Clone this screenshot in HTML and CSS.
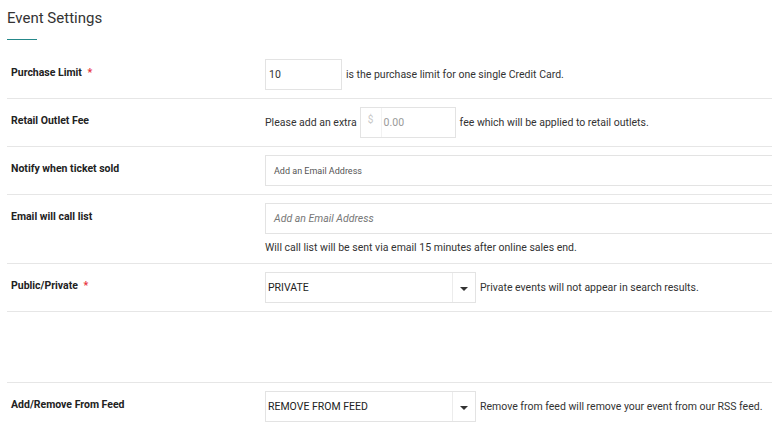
FILE: index.html
```html
<!DOCTYPE html>
<html lang="en">
<head>
  <meta charset="UTF-8">
  <title>Event Settings</title>
  <link rel="stylesheet" href="styles.css">
</head>
<body>
  <div class="settings">
    <h2 class="settings-title">Event Settings</h2>

    <div class="setting-row">
      <div class="setting-label">Purchase Limit <span class="req">*</span></div>
      <div class="setting-control">
        <input class="field field-short" type="text" value="10">
        <span class="note">is the purchase limit for one single Credit Card.</span>
      </div>
    </div>

    <div class="setting-row">
      <div class="setting-label">Retail Outlet Fee</div>
      <div class="setting-control">
        <span class="note note-before">Please add an extra</span>
        <div class="money">
          <span class="money-sign">$</span>
          <span class="money-value">0.00</span>
        </div>
        <span class="note">fee which will be applied to retail outlets.</span>
      </div>
    </div>

    <div class="setting-row">
      <div class="setting-label">Notify when ticket sold</div>
      <div class="setting-control">
        <div class="field field-wide field-small">Add an Email Address</div>
      </div>
    </div>

    <div class="setting-row">
      <div class="setting-label">Email will call list</div>
      <div class="setting-control setting-stack">
        <div class="field field-wide field-italic">Add an Email Address</div>
        <div class="help">Will call list will be sent via email 15 minutes after online sales end.</div>
      </div>
    </div>

    <div class="setting-row">
      <div class="setting-label">Public/Private <span class="req">*</span></div>
      <div class="setting-control">
        <div class="select">
          <span class="select-value">PRIVATE</span>
          <span class="select-arrow"></span>
        </div>
        <span class="note">Private events will not appear in search results.</span>
      </div>
    </div>

    <div class="setting-row setting-empty"></div>

    <div class="setting-row">
      <div class="setting-label">Add/Remove From Feed</div>
      <div class="setting-control">
        <div class="select">
          <span class="select-value">REMOVE FROM FEED</span>
          <span class="select-arrow"></span>
        </div>
        <span class="note">Remove from feed will remove your event from our RSS feed.</span>
      </div>
    </div>
  </div>
</body>
</html>
```

FILE: styles.css
```css
body {
  margin: 0;
  font-family: Roboto, "Liberation Sans", sans-serif;
  color: #333;
  background: #fff;
  overflow: hidden;
}

.settings {
  width: 765px;
  padding: 8px 0 0 7px;
  overflow: hidden;
}

.settings-title {
  margin: 0;
  font-size: 15px;
  font-weight: 400;
  line-height: 20px;
  color: #333;
  padding-bottom: 11px;
}

.settings-title::after {
  content: "";
  display: block;
  width: 30px;
  height: 1px;
  background: #25888a;
  margin-top: 11px;
}

.setting-row {
  display: flex;
  padding: 8px 0;
  border-bottom: 1px solid #e6e6e6;
}

.setting-empty {
  height: 54px;
}

.setting-label {
  flex-shrink: 0;
  width: 254px;
  padding-left: 4px;
  font-size: 10.5px;
  font-weight: 700;
  line-height: 28px;
  color: #222;
}

.req {
  color: #e8333c;
  margin-left: 3px;
}

.setting-control {
  flex: 1;
  display: flex;
  align-items: center;
  font-size: 10.5px;
  min-width: 0;
}

.setting-stack {
  flex-direction: column;
  align-items: flex-start;
}

.field {
  box-sizing: border-box;
  height: 31px;
  border: 1px solid #e3e3e3;
  font-family: inherit;
  font-size: 10.5px;
  color: #333;
  padding: 0 3px;
  display: flex;
  align-items: center;
}

.field-short {
  width: 77px;
  outline: none;
}

.field-wide {
  flex-shrink: 0;
  width: 530px;
  padding-left: 8px;
}

.field-small {
  font-size: 9px;
  color: #555;
}

.field-italic {
  font-style: italic;
  color: #777;
}

.note {
  margin-left: 4px;
  color: #333;
  white-space: nowrap;
}

.note-before {
  margin-left: 0;
  margin-right: 3px;
}

.money {
  box-sizing: border-box;
  width: 96px;
  height: 31px;
  border: 1px solid #e3e3e3;
  display: flex;
  align-items: center;
}

.money-sign {
  width: 20px;
  height: 29px;
  line-height: 24px;
  text-align: center;
  color: #c8c8c8;
  font-size: 10px;
  border-right: 1px solid #f2f2f2;
}

.money-value {
  padding-left: 2px;
  color: #999;
}

.help {
  margin-top: 7px;
  line-height: 14px;
  font-size: 10.5px;
}

.select {
  box-sizing: border-box;
  flex-shrink: 0;
  width: 211px;
  height: 31px;
  border: 1px solid #e3e3e3;
  display: flex;
  align-items: stretch;
}

.select-value {
  flex: 1;
  display: flex;
  align-items: center;
  padding-left: 2px;
  font-size: 10.5px;
  color: #222;
}

.select-arrow {
  width: 22px;
  border-left: 1px solid #ececec;
  position: relative;
}

.select-arrow::after {
  content: "";
  position: absolute;
  left: 7px;
  top: 14px;
  border-left: 4px solid transparent;
  border-right: 4px solid transparent;
  border-top: 4px solid #333;
}
```
